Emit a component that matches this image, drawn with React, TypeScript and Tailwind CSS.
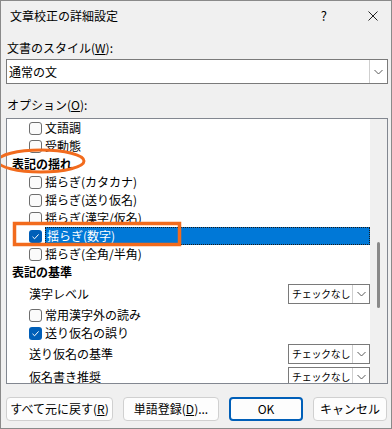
import React from 'react'

const font = { fontFamily: '"Noto Sans CJK JP", "Noto Sans", sans-serif' }

function CheckBox({ checked }: { checked?: boolean }) {
  if (checked) {
    return (
      <span className="flex h-[13px] w-[13px] shrink-0 items-center justify-center rounded-[3px] bg-[#005fb8]">
        <svg width="9" height="9" viewBox="0 0 9 9">
          <path d="M1.5 4.8 L3.6 6.8 L7.6 2.4" stroke="white" strokeWidth="1" fill="none" />
        </svg>
      </span>
    )
  }
  return <span className="h-[13px] w-[13px] shrink-0 rounded-[3px] border border-[#6e6e6e] bg-[#fbfbfb]" />
}

function Chevron() {
  return (
    <svg width="9" height="6" viewBox="0 0 9 6">
      <path d="M0.5 1 L4.5 5 L8.5 1" stroke="#5a5a5a" strokeWidth="1" fill="none" />
    </svg>
  )
}

function CheckRow({ label, checked, selected }: { label: string; checked?: boolean; selected?: boolean }) {
  return (
    <div className="flex h-[18px] shrink-0 items-center pl-[22px] leading-none">
      <CheckBox checked={checked} />
      {selected ? (
        <span className="ml-[3px] flex h-[18px] flex-1 items-center border border-dotted border-[#1a1a1a] bg-[#0078d7] pl-[1px] text-white">
          {label}
        </span>
      ) : (
        <span className="ml-[3px]">{label}</span>
      )}
    </div>
  )
}

function Header({ label }: { label: string }) {
  return <div className="flex h-[18px] shrink-0 items-center pl-[5px] font-bold leading-none">{label}</div>
}

function SelectRow({ label, h }: { label: string; h: string }) {
  return (
    <div className={`flex ${h} shrink-0 items-center justify-between pl-[22px] leading-none`}>
      <span>{label}</span>
      <div className="flex h-[20px] w-[82px] items-center border border-[#7a7a7a] bg-white">
        <span className="flex-1 whitespace-nowrap pl-[3px] text-[10px] tracking-[-0.3px]">チェックなし</span>
        <span className="flex h-full w-[17px] shrink-0 items-center justify-center border-l border-[#cfcfcf]">
          <Chevron />
        </span>
      </div>
    </div>
  )
}

function Button({ children, primary, w }: { children: React.ReactNode; primary?: boolean; w: string }) {
  return (
    <button
      className={`flex h-[24px] ${w} items-center justify-center whitespace-nowrap rounded-[4px] bg-[#fdfdfd] text-[12px] ${
        primary ? 'border-2 border-[#005fb8]' : 'border border-[#d0d0d0]'
      }`}
    >
      {children}
    </button>
  )
}

export default function App() {
  return (
    <div
      style={font}
      className="relative flex h-[429px] w-[392px] flex-col overflow-hidden border border-[#8a8a8a] bg-[#f0f0f0] text-[12px] text-black"
    >
      <div className="flex h-[30px] shrink-0 items-center pl-[9px]">
        <span className="flex-1">文章校正の詳細設定</span>
        <span className="mr-[41px] text-[13px]">?</span>
        <svg width="10" height="10" viewBox="0 0 10 10" className="mr-[13px]">
          <path d="M0.5 0.5 L9.5 9.5 M9.5 0.5 L0.5 9.5" stroke="#222" strokeWidth="1" />
        </svg>
      </div>

      <div className="flex flex-1 flex-col pl-[5px] pr-[3px]">
        <div className="mt-[9px] h-[16px] leading-[16px] pl-[1px]">
          文書のスタイル(<span className="underline">W</span>):
        </div>
        <div className="mt-[3px] flex h-[25px] items-center border border-[#7a7a7a] bg-white">
          <span className="flex-1 pl-[2px]">通常の文</span>
          <span className="flex h-full w-[18px] items-center justify-center border-l border-[#cfcfcf]">
            <Chevron />
          </span>
        </div>
        <div className="mt-[13px] h-[16px] leading-[16px] pl-[1px]">
          オプション(<span className="underline">O</span>):
        </div>

        <div className="mt-[5px] flex h-[266px] overflow-hidden border border-[#828790] bg-white">
          <div className="flex flex-1 flex-col overflow-hidden">
            <CheckRow label="文語調" />
            <CheckRow label="受動態" />
            <Header label="表記の揺れ" />
            <CheckRow label="揺らぎ(カタカナ)" />
            <CheckRow label="揺らぎ(送り仮名)" />
            <CheckRow label="揺らぎ(漢字/仮名)" />
            <CheckRow label="揺らぎ(数字)" checked selected />
            <CheckRow label="揺らぎ(全角/半角)" />
            <Header label="表記の基準" />
            <SelectRow label="漢字レベル" h="h-[25px]" />
            <CheckRow label="常用漢字外の読み" />
            <CheckRow label="送り仮名の誤り" checked />
            <SelectRow label="送り仮名の基準" h="h-[23px]" />
            <SelectRow label="仮名書き推奨" h="h-[23px]" />
          </div>
          <div className="flex w-[17px] shrink-0 flex-col items-center bg-[#f0f0f0]">
            <div className="mt-[123px] h-[66px] w-[3px] rounded-full bg-[#8a8a8a]" />
          </div>
        </div>

        <div className="mt-[13px] flex items-center">
          <Button w="w-[107px]">
            すべて元に戻す(<span className="underline">R</span>)
          </Button>
          <Button w="w-[96px] ml-[10px]">
            単語登録(<span className="underline">D</span>)...
          </Button>
          <Button primary w="w-[74px] ml-[10px]">
            OK
          </Button>
          <Button w="w-[74px] ml-[10px]">キャンセル</Button>
        </div>
      </div>

      <svg className="pointer-events-none absolute left-0 top-0" width="392" height="429">
        <ellipse cx="40" cy="160" rx="43" ry="11" fill="none" stroke="#f26b1d" strokeWidth="3" />
        <rect x="13.5" y="222.5" width="165" height="21" fill="none" stroke="#f26b1d" strokeWidth="3.5" />
      </svg>
    </div>
  )
}
